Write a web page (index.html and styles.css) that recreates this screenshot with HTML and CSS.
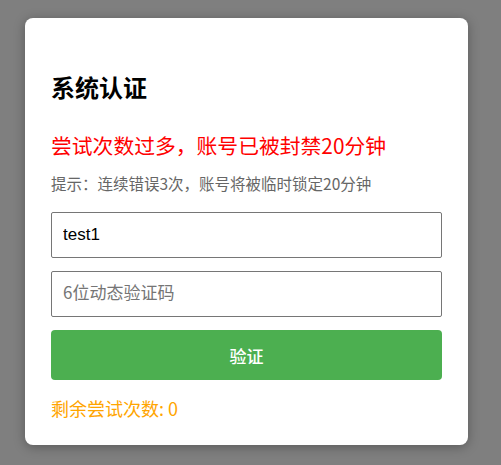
FILE: index.html
```html
<!DOCTYPE html>
<html lang="zh-CN">
<head>
  <meta charset="UTF-8">
  <title>系统认证</title>
  <link rel="stylesheet" href="styles.css">
</head>
<body>
  <div class="overlay">
    <div class="modal">
      <h2>系统认证</h2>
      <p class="error">尝试次数过多，账号已被封禁20分钟</p>
      <p class="hint">提示：连续错误3次，账号将被临时锁定20分钟</p>
      <input type="text" class="field" value="test1">
      <input type="text" class="field" placeholder="6位动态验证码">
      <button class="verify">验证</button>
      <p class="remain">剩余尝试次数: 0</p>
    </div>
  </div>
</body>
</html>
```

FILE: styles.css
```css
html, body {
  margin: 0;
  height: 100%;
}
body {
  font-family: "Noto Sans CJK SC", "Noto Sans", sans-serif;
  background: #fff;
}
.overlay {
  background: rgba(0,0,0,0.5);
  height: 100%;
  padding: 18px 0 0 25px;
  box-sizing: border-box;
}
.modal {
  background: white;
  width: 443px;
  height: 427px;
  box-sizing: border-box;
  padding: 26px 26px 0;
  border-radius: 8px;
  box-shadow: 0 2px 12px rgba(0,0,0,0.3);
  display: flex;
  flex-direction: column;
}
h2 {
  font-size: 24px;
  line-height: 34px;
  margin: 26px 0 0;
  color: #000;
}
.error {
  color: red;
  font-size: 20.8px;
  line-height: 30px;
  margin: 26px 0 0;
}
.hint {
  color: #666;
  font-size: 15.5px;
  line-height: 22px;
  margin: 12px 0 0;
}
.field {
  height: 46px;
  box-sizing: border-box;
  margin: 18px 0 0;
  padding: 0 11px;
  border: 1px solid #767676;
  border-radius: 2px;
  font-family: "Liberation Sans", "Noto Sans CJK SC", sans-serif;
  font-size: 17px;
  color: #000;
}
.field + .field {
  margin-top: 13px;
}
.field::placeholder {
  color: #757575;
  font-family: "Noto Sans CJK SC", sans-serif;
}
.verify {
  height: 50px;
  margin-top: 13px;
  border: none;
  border-radius: 4px;
  background: #4caf50;
  color: white;
  font-family: "Noto Sans CJK SC", sans-serif;
  font-size: 17px;
  font-weight: 500;
}
.remain {
  color: orange;
  font-size: 18px;
  line-height: 26px;
  margin: 15px 0 0;
}
```
